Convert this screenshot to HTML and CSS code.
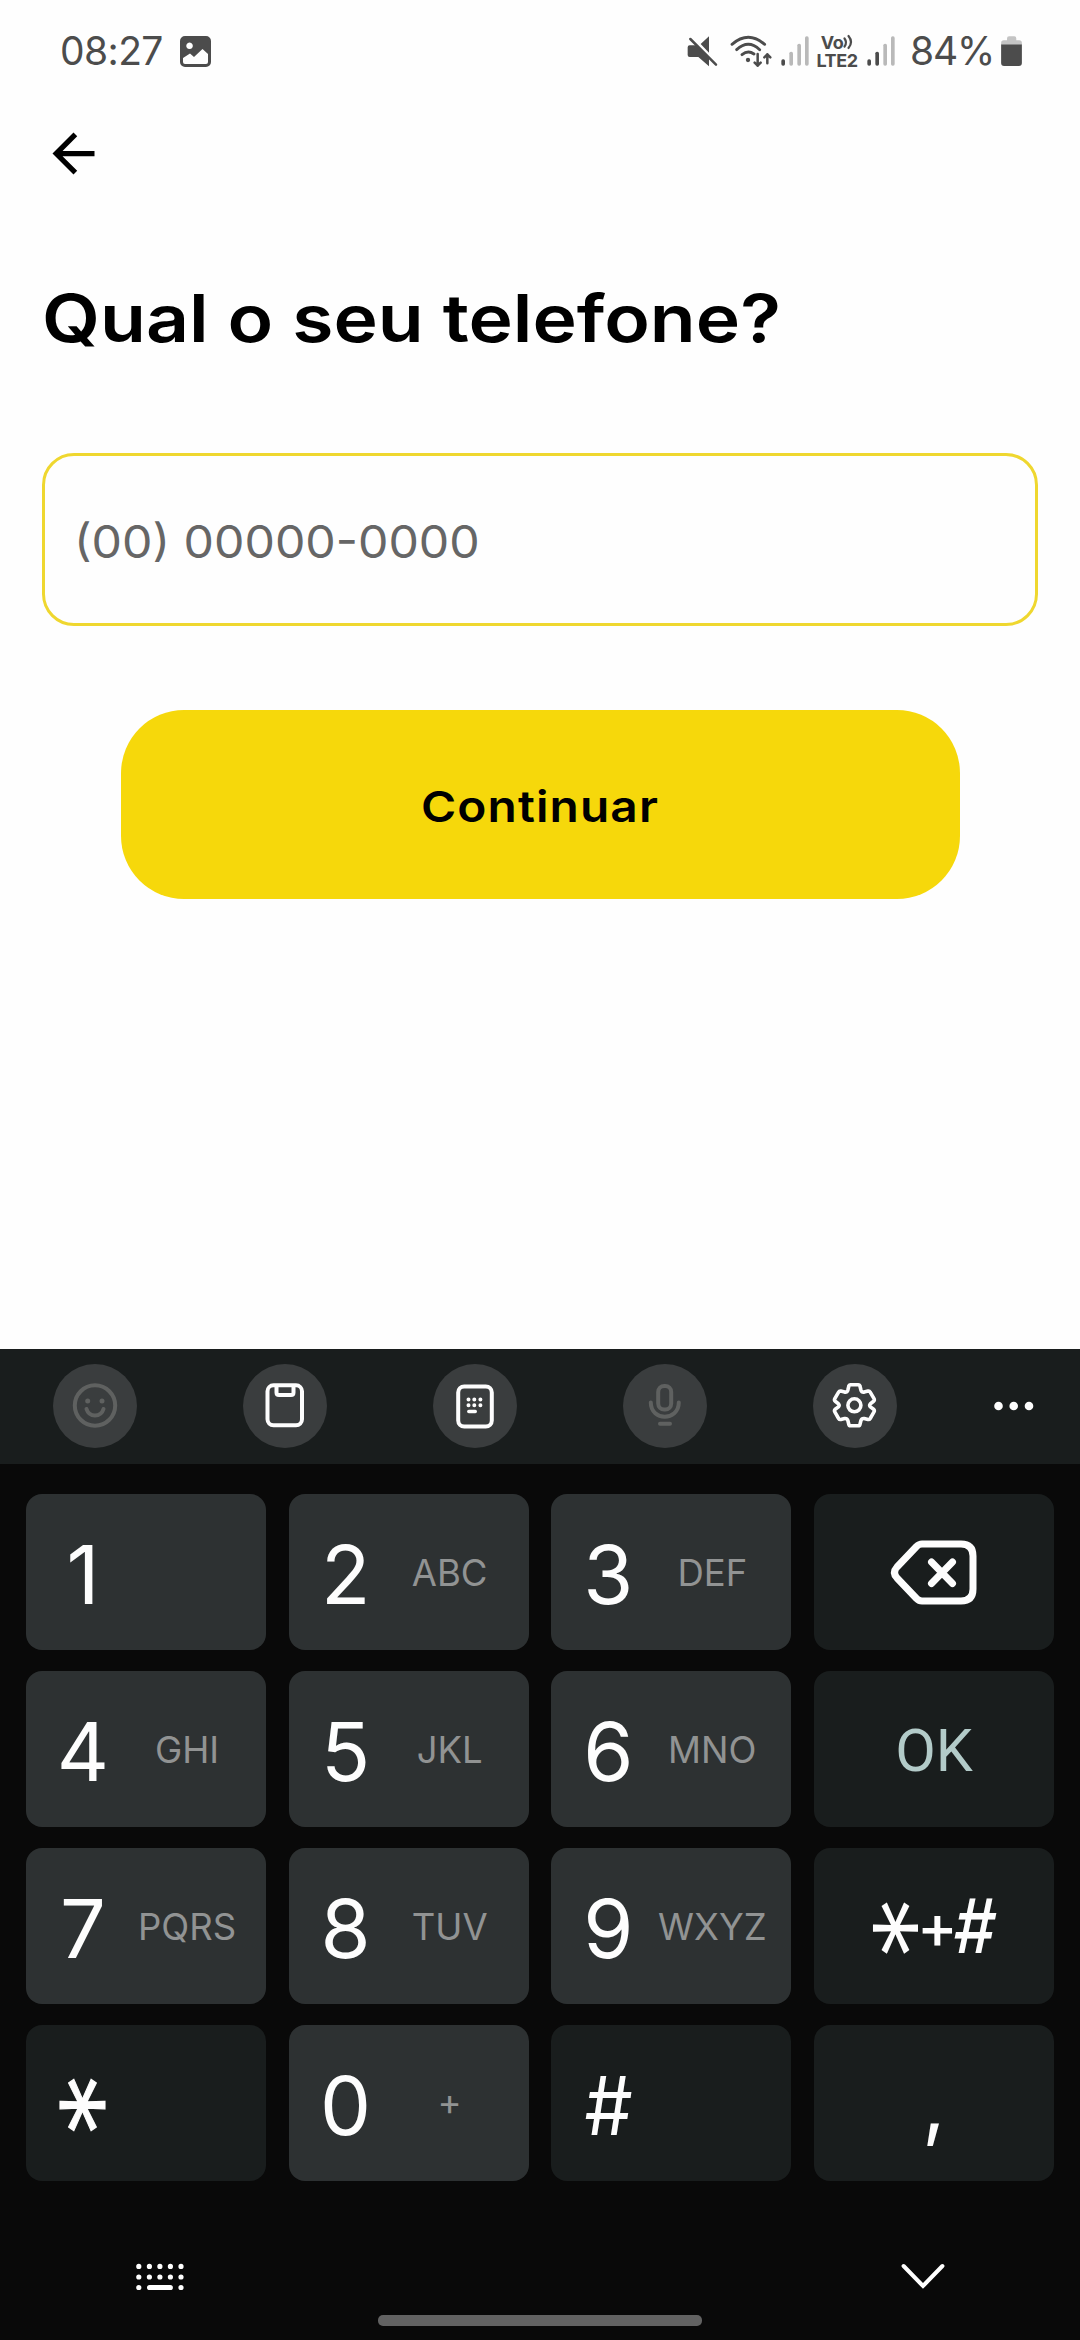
FILE: index.html
```html
<!DOCTYPE html>
<html lang="pt-BR">
<head>
<meta charset="utf-8">
<title>Qual o seu telefone?</title>
<link rel="stylesheet" href="styles.css">
</head>
<body>
<div class="screen">
  <header class="status">
    <div class="status-left">
      <span class="clock">08:27</span>
      <svg class="ic-photo" viewBox="0 0 31 31"><path fill="#4c4c4c" fill-rule="evenodd" d="M5 0h21a5 5 0 0 1 5 5v21a5 5 0 0 1-5 5H5a5 5 0 0 1-5-5V5a5 5 0 0 1 5-5zM9.500 6.500a3.300 3.300 0 1 0 .1 0zM3 22v4q0 2 2 2h21q2 0 2-2v-8l-5.500-5-8.500 8-4-3.500z"/></svg>
    </div>
    <div class="status-right">
      <svg class="ic-mute" viewBox="76 42 93 96"><path fill="#4c4c4c" d="M142 46v49L117 69zM84 73h20l38 39v24l-32-28H84q-6 0-6-6V79q0-6 6-6z"/><path stroke="#4c4c4c" stroke-width="7.500" stroke-linecap="round" d="M86 54l77 77"/></svg>
      <svg class="ic-wifi" viewBox="206 42 126 96"><g fill="none" stroke="#4c4c4c" stroke-width="8.500" stroke-linecap="round"><path d="M212 70q49-42 98 0M226 86q35-32 69 0M242 101q18-15 36-2"/><path stroke-width="7.500" stroke-linejoin="round" d="M289 99v35m-9-9l9 9 9-9M318 127v-27m-9 9l9-9 9 9"/></g><circle cx="260" cy="117" r="6.500" fill="#4c4c4c"/></svg>
      <svg class="ic-signal" viewBox="360 46 84 90"><g fill="#b9b9b9"><rect x="385" y="93" width="11" height="42" rx="5"/><rect x="409" y="69" width="11" height="66" rx="5"/><rect x="432" y="47" width="11" height="88" rx="5"/></g><rect x="361" y="116" width="11" height="19" rx="5" fill="#4c4c4c"/></svg>
      <div class="volte">
        <div class="volte-row">Vo<svg class="ic-waves" viewBox="0 0 10 14"><path fill="none" stroke="#4c4c4c" stroke-width="2.200" stroke-linecap="round" d="M1.500 3.500q3 4 0 8M5.500 1q5 6 0 12"/></svg></div>
        <div class="volte-row lte">LTE2</div>
      </div>
      <svg class="ic-signal two" viewBox="360 46 84 90"><g fill="#b9b9b9"><rect x="409" y="69" width="11" height="66" rx="5"/><rect x="432" y="47" width="11" height="88" rx="5"/></g><g fill="#4c4c4c"><rect x="361" y="116" width="11" height="19" rx="5"/><rect x="385" y="93" width="11" height="42" rx="5"/></g></svg>
      <span class="percent">84%</span>
      <svg class="ic-battery" viewBox="1017 45 63 91"><path fill="#c4c4c4" d="M1017 72v-6q0-8 8-8h10v-6q0-6 6-6h16q6 0 6 6v6h9q8 0 8 8v6z"/><path fill="#4c4c4c" d="M1017 71h63v56q0 9-9 9h-45q-9 0-9-9z"/></svg>
    </div>
  </header>

  <main class="content">
    <svg class="back" viewBox="0 0 24 24"><path d="M20 11H7.830l5.590-5.590L12 4l-8 8 8 8 1.410-1.410L7.830 13H20v-2z"/></svg>
    <h1 class="title"><span>Qual o seu telefone?</span></h1>
    <div class="field"><span>(00) 00000-0000</span></div>
    <div class="submit"><span>Continuar</span></div>
  </main>

  <section class="keyboard">
    <div class="toolbar">
      <div class="tool"><svg viewBox="-42 -42 84 84"><g fill="none" stroke="#5f6160" stroke-width="4" stroke-linecap="round"><circle cx="0" cy="-.5" r="20.200"/><path d="M-8.500 3q2 6.500 8.500 6.500T8.500 3"/></g><g fill="#5f6160"><circle cx="-7.300" cy="-5" r="2.500"/><circle cx="7" cy="-5" r="2.500"/></g></svg></div>
      <div class="tool"><svg viewBox="-42 -42 84 84"><g fill="none" stroke="#fdfdfd" stroke-width="4"><rect x="-17.500" y="-20.700" width="34.500" height="40" rx="6"/><path d="M-8.500-20v6.500q0 2.500 2.500 2.500H6q2.500 0 2.500-2.500V-20"/></g></svg></div>
      <div class="tool"><svg viewBox="-42 -42 84 84"><rect x="-16.800" y="-19.500" width="33.600" height="40" rx="6" fill="none" stroke="#fdfdfd" stroke-width="4"/><g stroke="#fdfdfd" stroke-width="4" stroke-linecap="round"><path d="M-6.500-6.500h0M-.7-6.500h0M5.400-6.500h0M-6.500-.8h0M-.7-.8h0M5.400-.8h0"/><path stroke-width="3.400" d="M-6.200 5.500h6.500"/></g></svg></div>
      <div class="tool"><svg viewBox="-42 -42 84 84"><g fill="none" stroke="#5f6160" stroke-width="4" stroke-linecap="round"><rect x="-6.800" y="-20" width="13" height="23.500" rx="6"/><path d="M-14.200-3.500C-14.200 6-7 10.700-.3 10.700S13.800 6 13.800-3.500M-5 17.800H5"/></g></svg></div>
      <div class="tool"><svg viewBox="-42 -42 84 84"><g fill="none" stroke="#fdfdfd" stroke-width="3.600" stroke-linejoin="round" transform="translate(-.6 -.7)"><path d="M-3.800-20.500H3.800Q5.300-20.500 5.600-19L6.600-15Q7.400-12.800 9.800-13.200L13.600-14.200Q15-14.500 15.800-13.200L19.600-6.600Q20.400-5.200 19.200-4L16-1.600Q14.400 0 16 1.600L19.200 4Q20.400 5.200 19.600 6.600L15.800 13.200Q15 14.500 13.600 14.200L9.800 13.200Q7.400 12.800 6.600 15L5.600 19Q5.300 20.500 3.800 20.500H-3.800Q-5.300 20.500-5.600 19L-6.600 15Q-7.400 12.800-9.800 13.200L-13.600 14.200Q-15 14.500-15.800 13.200L-19.600 6.600Q-20.400 5.200-19.200 4L-16 1.600Q-14.400 0-16-1.600L-19.200-4Q-20.400-5.200-19.600-6.600L-15.800-13.200Q-15-14.500-13.600-14.200L-9.800-13.200Q-7.400-12.800-6.600-15L-5.600-19Q-5.300-20.500-3.800-20.500z"/><circle r="6.500"/></g></svg></div>
      <svg class="more" viewBox="0 0 40 10"><circle cx="4.500" cy="5" r="4.300"/><circle cx="19.700" cy="5" r="4.300"/><circle cx="35" cy="5" r="4.300"/></svg>
    </div>

    <div class="keys">
      <div class="key"><b>1</b></div>
      <div class="key"><b>2</b><i>ABC</i></div>
      <div class="key"><b>3</b><i>DEF</i></div>
      <div class="key dark mid"><svg class="ic-del" viewBox="891 1540 86 65"><g fill="none" stroke="#fdfdfd" stroke-width="7" stroke-linejoin="round" stroke-linecap="round"><path d="M922 1544h39q12 0 12 12v33q0 12-12 12h-39q-3 0-5.500-2.500l-19.500-20.500q-5-5.500 0-11l19.500-20.500q2.500-2.500 5.500-2.500z"/><path d="M931.500 1562l21 21.500m0-21.500l-21 21.500"/></g></svg></div>
      <div class="key"><b>4</b><i>GHI</i></div>
      <div class="key"><b>5</b><i>JKL</i></div>
      <div class="key"><b>6</b><i>MNO</i></div>
      <div class="key dark mid ok">OK</div>
      <div class="key"><b>7</b><i>PQRS</i></div>
      <div class="key"><b>8</b><i>TUV</i></div>
      <div class="key"><b>9</b><i>WXYZ</i></div>
      <div class="key dark mid symbols"><span class="cell-star"><span class="star">*</span></span><span class="plus">+</span><span class="hash">#</span></div>
      <div class="key dark"><b class="star-key"><span class="star">*</span></b></div>
      <div class="key"><b>0</b><i class="raised">+</i></div>
      <div class="key dark"><b><span class="pound">#</span></b></div>
      <div class="key dark mid comma">,</div>
    </div>

    <footer class="navbar">
      <div class="nav-row">
        <svg class="ic-kbd" viewBox="0 0 50 28"><g stroke="#fff" stroke-width="5.200" stroke-linecap="round"><path d="M3.800 3.400h0M14.400 3.400h0M24.900 3.400h0M35.400 3.400h0M46 3.400h0M3.800 14h0M14.400 14h0M24.900 14h0M35.400 14h0M46 14h0M3.800 24.500h0M46 24.500h0M14.600 24.500h20.700"/></g></svg>
        <svg class="ic-down" viewBox="0 0 44 26"><path fill="none" stroke="#fff" stroke-width="4" stroke-linecap="round" d="M2.600 3l19.400 20L41.400 3"/></svg>
      </div>
      <div class="home"></div>
    </footer>
  </section>
</div>
</body>
</html>
```

FILE: styles.css
```css
* { box-sizing: border-box; }
body { margin: 0; background: #fefefe; font-family: Inter, "Liberation Sans", sans-serif; }
svg { display: block; flex: none; overflow: visible; }
.screen { width: 1080px; height: 2340px; display: flex; flex-direction: column; }

.status { height: 102px; padding: 0 58px 0 60px; display: flex; justify-content: space-between; align-items: center; color: #4c4c4c; }
.status-left, .status-right { display: flex; align-items: center; height: 102px; }
.clock, .percent { font-size: 39px; line-height: 102px; white-space: nowrap; }
.clock { width: 120px; letter-spacing: -.6px; }
.ic-photo { width: 31px; height: 31px; }
.ic-mute { width: 31px; height: 32px; margin-right: 12px; }
.ic-wifi { width: 42px; height: 32px; margin-right: 9px; }
.ic-signal { width: 28px; height: 30px; margin-right: 8px; }
.ic-signal.two { margin: 0 15px 0 10px; }
.volte { width: 40px; display: flex; flex-direction: column; align-items: center; gap: 1px; font-weight: 700; }
.volte-row { display: flex; align-items: center; font-size: 18px; line-height: 17px; letter-spacing: -.5px; }
.lte { letter-spacing: -.4px; }
.ic-waves { width: 10px; height: 14px; }
.percent { width: 91px; letter-spacing: -1.200px; }
.ic-battery { width: 21px; height: 30px; }

.content { flex: 1; padding: 20px 42px 0; display: flex; flex-direction: column; }
.back { width: 63px; height: 63px; }
.title { margin: 93px 0 0; font-size: 66px; line-height: 80px; font-weight: 600; white-space: nowrap; color: #000; }
.title span { display: inline-block; transform-origin: left; transform: scaleX(1.137); }
.field { margin-top: 95px; height: 173px; border: 3px solid #efd72f; border-radius: 32px; padding: 4px 0 0 29px; display: flex; align-items: center; font-size: 45px; color: #666; }
.field span { transform-origin: left; transform: scaleX(1.072); }
.submit { margin: 84px auto 0; width: 839px; height: 189px; border-radius: 63px; background: #f6d80b; display: flex; align-items: center; justify-content: center; padding-top: 2px; font-size: 43px; font-weight: 600; color: #000; }
.submit span { letter-spacing: 1px; transform: scaleX(1.112); }

.keyboard { height: 991px; background: #090909; display: flex; flex-direction: column; }
.toolbar { height: 115px; background: #191d1d; padding: 0 46px 1px 53px; display: flex; align-items: center; gap: 106px; }
.tool { width: 84px; height: 84px; flex: none; border-radius: 50%; background: #3a3d3e; }
.tool svg { width: 84px; height: 84px; }
.more { width: 40px; height: 10px; margin-left: -9px; fill: #fdfdfd; }
.keys { padding: 30px 26px 0; display: grid; grid-template-columns: repeat(4, 240px); justify-content: space-between; grid-auto-rows: 156px; row-gap: 21px; }
.key { background: #2d3132; border-radius: 16px; display: flex; align-items: center; color: #fdfdfd; line-height: 150px; }
.key b { width: 114px; padding-top: 5px; text-align: center; font-size: 81px; font-weight: 400; }
.key i { width: 94px; padding-top: 1px; font-style: normal; font-size: 36.500px; text-align: center; color: #919393; display: flex; justify-content: center; }
.key i.raised { padding-bottom: 4px; }
.key.dark { background: #191d1d; }
.key.mid { justify-content: center; }
.ic-del { width: 86px; height: 65px; }
.ok { font-family: Roboto, sans-serif; font-size: 59px; color: #b3cbc9; padding-top: 4px; }
.key .star-key { display: flex; justify-content: center; padding-top: 0; }
.star { display: block; flex: none; font-size: 110px; line-height: 110px; font-weight: 300; transform: translate(-18px, 2px) scaleY(1.220) rotate(90deg); }
.star-key .star { -webkit-text-stroke: 1px #fdfdfd; }
.symbols { font-size: 75px; font-weight: 500; }
.symbols span { display: flex; flex: none; justify-content: center; align-items: center; }
.cell-star { width: 46px; }
.plus { width: 37px; font-size: 61px; }
.hash { width: 39px; transform: scaleX(.88) skewX(-4deg); }
.pound { display: inline-block; transform: scaleX(.94); }
.comma { font-size: 81px; }

.navbar { flex: 1; display: flex; flex-direction: column; align-items: center; padding-top: 82px; }
.nav-row { width: 810px; display: flex; justify-content: space-between; }
.ic-kbd { width: 50px; height: 28px; }
.ic-down { width: 44px; height: 26px; }
.home { margin-top: 24px; width: 324px; height: 11px; border-radius: 5px; background: #626262; }
```
